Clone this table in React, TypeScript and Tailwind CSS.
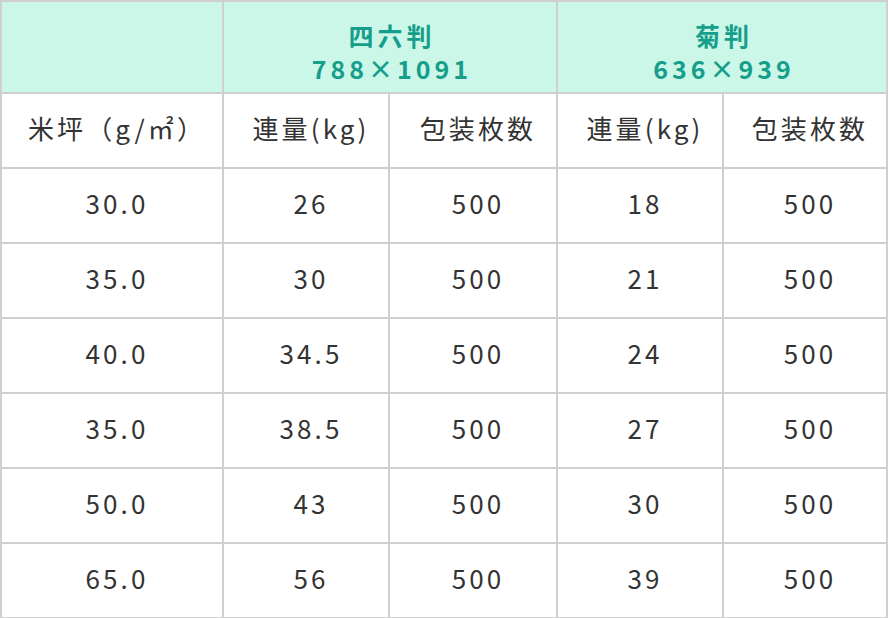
import React from "react";

const rows: [string, string, string, string, string][] = [
  ["30.0", "26", "500", "18", "500"],
  ["35.0", "30", "500", "21", "500"],
  ["40.0", "34.5", "500", "24", "500"],
  ["35.0", "38.5", "500", "27", "500"],
  ["50.0", "43", "500", "30", "500"],
  ["65.0", "56", "500", "39", "500"],
];

function Cell({ children }: { children?: React.ReactNode }) {
  return (
    <div className="bg-white flex items-center justify-center pl-[10px] pb-[5px] text-[26px] tracking-[0.12em] text-[#333333] leading-none">
      {children}
    </div>
  );
}

export default function App() {
  return (
    <div
      className="w-[888px] bg-[#cfcfcf] p-[2px] grid grid-cols-[220px_164px_166px_164px_162px] grid-rows-[90px_73px_73px_73px_73px_73px_73px_73px] gap-[2px]"
      style={{ fontFamily: '"Noto Sans CJK JP", "Noto Sans", sans-serif' }}
    >
      <div className="bg-[#cbf7e8]" />
      <div className="col-span-2 bg-[#cbf7e8] flex flex-col items-center pt-[17px] text-[25px] font-bold tracking-[0.16em] leading-[33px] text-[#169e8b]">
        <span className="pl-[4px]">四六判</span>
        <span className="pl-[4px]">788×1091</span>
      </div>
      <div className="col-span-2 bg-[#cbf7e8] flex flex-col items-center pt-[17px] text-[25px] font-bold tracking-[0.16em] leading-[33px] text-[#169e8b]">
        <span className="pl-[4px]">菊判</span>
        <span className="pl-[4px]">636×939</span>
      </div>

      <Cell>米坪（g/㎡）</Cell>
      <Cell>連量(kg)</Cell>
      <Cell>包装枚数</Cell>
      <Cell>連量(kg)</Cell>
      <Cell>包装枚数</Cell>

      {rows.map((r, i) => (
        <React.Fragment key={i}>
          {r.map((v, j) => (
            <Cell key={j}>{v}</Cell>
          ))}
        </React.Fragment>
      ))}
    </div>
  );
}
